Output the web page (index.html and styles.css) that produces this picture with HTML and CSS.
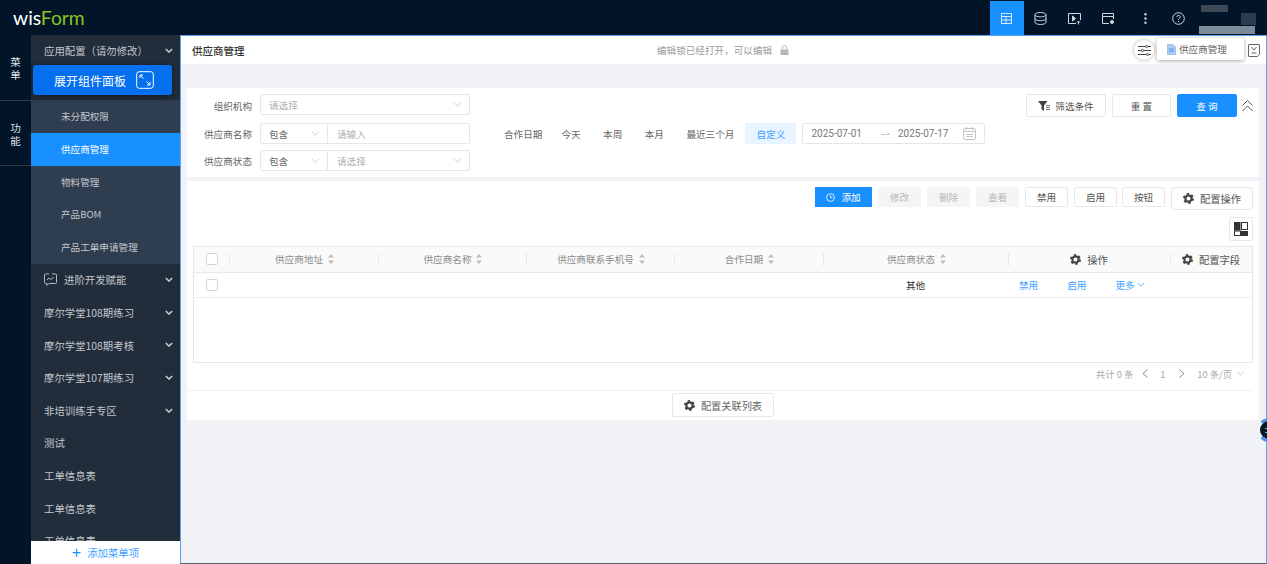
FILE: index.html
```html
<!DOCTYPE html>
<html lang="zh">
<head>
<meta charset="utf-8">
<title>供应商管理</title>
<link rel="stylesheet" href="styles.css">
</head>
<body>
<svg class="sprite" width="0" height="0" aria-hidden="true">
  <symbol id="gear" viewBox="0 0 12 12">
    <circle cx="6" cy="6" r="3.4" fill="none" stroke="currentColor" stroke-width="2.4"/>
    <circle cx="6" cy="6" r="5" fill="none" stroke="currentColor" stroke-width="2" stroke-dasharray="2.6 2.64"/>
  </symbol>
  <symbol id="down" viewBox="0 0 10 6">
    <path d="M1 1l4 4 4-4" fill="none" stroke="currentColor" stroke-width="1"/>
  </symbol>
  <symbol id="down-b" viewBox="0 0 10 6">
    <path d="M1 1l4 4 4-4" fill="none" stroke="currentColor" stroke-width="1.800"/>
  </symbol>
  <symbol id="sort" viewBox="0 0 6 10">
    <path d="M3 0l3 3.6H0zM3 10L0 6.400h6z" fill="currentColor"/>
  </symbol>
</svg>
<div class="app">
  <header class="topbar">
    <div class="logo"><span class="logo-w">wis</span><span class="logo-g">Form</span></div>
    <nav class="top-icons">
      <span class="top-btn active"><svg width="11" height="11" viewBox="0 0 11 11" fill="none" stroke="#fff" stroke-opacity=".8"><rect x=".5" y=".5" width="10" height="10"/><path d="M.5 3.500h10M5 3.500v7M.5 7h10"/></svg></span>
      <span class="top-btn"><svg width="13" height="13" viewBox="0 0 13 13" fill="none" stroke="#cfd6dd"><ellipse cx="6.500" cy="2.700" rx="5.500" ry="2.200"/><path d="M1 2.700v7.600c0 1.200 2.500 2.200 5.500 2.200s5.500-1 5.500-2.200V2.700M1 6.500c0 1.200 2.500 2.200 5.500 2.200S12 7.700 12 6.500"/></svg></span>
      <span class="top-btn"><svg width="13" height="13" viewBox="0 0 13 13" fill="none" stroke="#cfd6dd"><path d="M8 11.500H.5v-10h12V8"/><path d="M4.500 4l3 2.500-3 2.500z" fill="#cfd6dd"/><path d="M10.500 12.500V9M9 10.500l1.500-1.500 1.500 1.500"/></svg></span>
      <span class="top-btn"><svg width="13" height="13" viewBox="0 0 13 13" fill="none" stroke="#cfd6dd"><path d="M7 11.500H.5v-10h11V7M.5 4.500h11"/><circle cx="10" cy="10" r="1.500" fill="#cfd6dd"/></svg></span>
      <span class="top-btn top-dots"><svg width="3" height="11" viewBox="0 0 3 11" fill="#cfd6dd"><circle cx="1.500" cy="1.300" r="1.200"/><circle cx="1.500" cy="5.500" r="1.200"/><circle cx="1.500" cy="9.700" r="1.200"/></svg></span>
      <span class="top-btn"><svg width="13" height="13" viewBox="0 0 13 13" fill="none" stroke="#cfd6dd"><circle cx="6.500" cy="6.500" r="5.800"/><path d="M4.800 5c0-2.200 3.500-2.200 3.500 0 0 1.200-1.800 1.300-1.800 2.700M6.500 9v1"/></svg></span>
    </nav>
    <div class="user">
      <i class="u1"></i>
      <i class="u2"></i>
      <i class="u3"></i>
    </div>
  </header>
  <div class="body">
    <aside class="rail">
      <div class="rail-item rail-1">菜<br>单</div>
      <div class="rail-item rail-2">功<br>能</div>
    </aside>
    <aside class="sidebar">
      <div class="menu">
        <div class="mi">应用配置（请勿修改）<svg class="mi-arrow"><use href="#down-b"/></svg></div>
        <div class="mi"></div>
        <div class="sub">
          <div class="si">未分配权限</div>
          <div class="si active">供应商管理</div>
          <div class="si">物料管理</div>
          <div class="si">产品BOM</div>
          <div class="si">产品工单申请管理</div>
        </div>
        <div class="mi"><svg class="mi-icon" width="13" height="13" viewBox="0 0 13 13" fill="none" stroke="#aeb6bf"><path d="M5 1h-3.500a1 1 0 0 0-1 1v7.500a1 1 0 0 0 1 1H3V12.500l2-2h6.500a1 1 0 0 0 1-1V2a1 1 0 0 0-1-1H8"/><path d="M3 7l2-2 2 1.500L10 4"/></svg>进阶开发赋能<svg class="mi-arrow"><use href="#down-b"/></svg></div>
        <div class="mi">摩尔学堂108期练习<svg class="mi-arrow"><use href="#down-b"/></svg></div>
        <div class="mi">摩尔学堂108期考核<svg class="mi-arrow"><use href="#down-b"/></svg></div>
        <div class="mi">摩尔学堂107期练习<svg class="mi-arrow"><use href="#down-b"/></svg></div>
        <div class="mi">非培训练手专区<svg class="mi-arrow"><use href="#down-b"/></svg></div>
        <div class="mi">测试</div>
        <div class="mi">工单信息表</div>
        <div class="mi">工单信息表</div>
        <div class="mi">工单信息表</div>
      </div>
      <div class="expand">展开组件面板
        <svg width="18" height="18" viewBox="0 0 18 18" fill="none" stroke="#fff"><rect x=".7" y=".7" width="16.600" height="16.600" rx="2.500"/><path d="M4 4l3.500 3.500M4 7V4h3M14 14l-3.500-3.500M14 11v3h-3"/></svg>
      </div>
      <div class="add-menu"><span class="plus">+</span>添加菜单项</div>
    </aside>
    <main class="main">
      <div class="page-head">
        <div class="page-title">供应商管理</div>
        <div class="lock">编辑锁已经打开，可以编辑
          <svg width="9" height="10" viewBox="0 0 9 10" fill="#b5b8bc"><path d="M.5 4.500h8V10h-8z"/><path d="M2.300 4.500V2.800a2.200 2.200 0 0 1 4.400 0v1.700" fill="none" stroke="#b5b8bc"/></svg>
        </div>
        <div class="head-right">
          <span class="round-btn"><svg width="13" height="11" viewBox="0 0 13 11" fill="none" stroke="#444"><path d="M0 1.500h7M10 1.500h3M0 5.500h3M6 5.500h7M0 9.500h8M11 9.500h2"/><circle cx="8.500" cy="1.500" r="1.100"/><circle cx="4.500" cy="5.500" r="1.100"/><circle cx="9.500" cy="9.500" r="1.100"/></svg></span>
          <span class="doc-icon"><svg width="12" height="13" viewBox="0 0 12 13" fill="none" stroke="#666"><path d="M1 .5h10a.5.500 0 0 1 .5.500v9L9.500 12.500H1a.5.500 0 0 1-.5-.500V1A.5.500 0 0 1 1 .5z"/><path d="M3.500 3l2.500 3 2.500-3M3.500 9h5"/></svg></span>
        </div>
        <div class="tab-pop">
          <svg width="9" height="11" viewBox="0 0 9 11"><path d="M.5.500h5.500L8.500 3v7.500h-8z" fill="#a9cdf2" stroke="#7fa8d4" stroke-width=".6"/><path d="M2 5h5M2 7h5" stroke="#3e8ee0" stroke-width=".8"/></svg>
          供应商管理
        </div>
      </div>
      <section class="filter">
        <div class="f-row f-row-1">
          <label class="f-label">组织机构</label>
          <div class="field field-up"><span class="ph">请选择</span><svg class="chev"><use href="#down"/></svg></div>
          <div class="f-actions">
            <button class="btn btn-filter"><svg width="12" height="10" viewBox="0 0 12 10" fill="#444"><path d="M0 0h9.500L6 4.500V10L3.500 8V4.500z"/><path d="M8 4.500h4M8 6.500h4M8 8.500h4" stroke="#777"/></svg>筛选条件</button>
            <button class="btn btn-reset">重 置</button>
            <button class="btn btn-query">查 询</button>
            <svg class="collapse" width="11" height="12" viewBox="0 0 11 12" fill="none" stroke="#555"><path d="M.5 5.500l5-5 5 5M.5 11l5-5 5 5"/></svg>
          </div>
        </div>
        <div class="f-row f-row-2">
          <label class="f-label">供应商名称</label>
          <div class="field">
            <span class="op">包含<svg class="chev"><use href="#down"/></svg></span>
            <span class="ph ph-in">请输入</span>
          </div>
          <div class="dates">
            <span class="d-label">合作日期</span>
            <span class="d-opt">今天</span>
            <span class="d-opt">本周</span>
            <span class="d-opt">本月</span>
            <span class="d-opt">最近三个月</span>
            <span class="d-opt on">自定义</span>
            <div class="range">
              <span>2025-07-01</span>
              <svg class="arrow" width="9" height="5" viewBox="0 0 9 5" fill="none" stroke="#c4c4c4"><path d="M0 3.500h8.500L6.500 1.500"/></svg>
              <span>2025-07-17</span>
              <svg class="cal" width="13" height="13" viewBox="0 0 13 13" fill="none" stroke="#c4c4c4"><rect x=".5" y="1.500" width="12" height="11" rx="1.500"/><path d="M.5 4.500h12M3.500 0v3M9.500 0v3M3 7.500h7M3 9.500h7"/></svg>
            </div>
          </div>
        </div>
        <div class="f-row f-row-3">
          <label class="f-label">供应商状态</label>
          <div class="field">
            <span class="op">包含<svg class="chev"><use href="#down"/></svg></span>
            <span class="ph ph-in">请选择</span>
            <svg class="chev"><use href="#down"/></svg>
          </div>
        </div>
      </section>
      <section class="card">
        <div class="toolbar">
          <button class="btn btn-add"><svg width="9" height="9" viewBox="0 0 9 9" fill="none" stroke="#d6eaff"><circle cx="4.500" cy="4.500" r="3.900"/><path d="M4.500 2.200v2.500h2"/></svg>添加</button>
          <button class="btn btn-t btn-off">修改</button>
          <button class="btn btn-t btn-off">删除</button>
          <button class="btn btn-t btn-off">查看</button>
          <button class="btn btn-t">禁用</button>
          <button class="btn btn-t">启用</button>
          <button class="btn btn-t btn-last">按钮</button>
          <button class="btn btn-cfg"><svg class="gear"><use href="#gear"/></svg>配置操作</button>
        </div>
        <div class="toolbar-2">
          <button class="btn btn-layout"><svg width="14" height="14" viewBox="0 0 14 14"><rect width="6.500" height="8.500" fill="#333"/><rect x="7.500" y=".5" width="6" height="7" fill="#fff" stroke="#333"/><rect x=".5" y="9" width="6" height="4.500" fill="#fff" stroke="#333"/><rect x="7" y="9" width="7" height="5" fill="#333"/></svg></button>
        </div>
        <div class="table">
          <div class="tr th">
            <div class="td td-check"><i class="check"></i></div>
            <div class="td td-sort"><span>供应商地址</span><svg class="sort"><use href="#sort"/></svg></div>
            <div class="td td-sort"><span>供应商名称</span><svg class="sort"><use href="#sort"/></svg></div>
            <div class="td td-sort"><span>供应商联系手机号</span><svg class="sort"><use href="#sort"/></svg></div>
            <div class="td td-sort"><span>合作日期</span><svg class="sort"><use href="#sort"/></svg></div>
            <div class="td td-sort"><span>供应商状态</span><svg class="sort"><use href="#sort"/></svg></div>
            <div class="td td-fix"><svg class="gear"><use href="#gear"/></svg><span>操作</span></div>
            <div class="td td-cfg"><svg class="gear"><use href="#gear"/></svg><span>配置字段</span></div>
          </div>
          <div class="tr tb">
            <div class="td td-check"><i class="check"></i></div>
            <div class="td"></div>
            <div class="td"></div>
            <div class="td"></div>
            <div class="td"></div>
            <div class="td td-status">其他</div>
            <div class="td td-ops"><a>禁用</a><a>启用</a><a>更多<svg class="more"><use href="#down"/></svg></a></div>
          </div>
        </div>
        <div class="pager">
          <span>共计 0 条</span>
          <svg class="p-prev" width="6" height="9" viewBox="0 0 6 9" fill="none" stroke="#888"><path d="M5.500.5l-4.500 4 4.500 4"/></svg>
          <span class="p-num">1</span>
          <svg class="p-next" width="6" height="9" viewBox="0 0 6 9" fill="none" stroke="#888"><path d="M.5.500l4.500 4-4.500 4"/></svg>
          <span class="p-size">10 条/页<svg class="chev"><use href="#down"/></svg></span>
        </div>
        <div class="card-foot">
          <button class="btn btn-rel"><svg class="gear"><use href="#gear"/></svg>配置关联列表</button>
        </div>
      </section>
      <div class="float-ball"><i></i></div>
    </main>
  </div>
</div>
</body>
</html>
```

FILE: styles.css
```css
* { box-sizing: border-box; }
html, body { margin: 0; padding: 0; }
body {
  width: 1267px;
  height: 564px;
  overflow: hidden;
  font-family: "Noto Sans CJK SC", "Noto Sans", sans-serif;
  font-size: 9.600px;
  color: #555;
}
.sprite { position: absolute; }
.app { display: flex; flex-direction: column; height: 564px; }

/* top bar */
.topbar {
  height: 35px;
  flex: none;
  background: #011428;
  display: flex;
  align-items: stretch;
  padding-top: 1px;
}
.logo {
  font-family: "Lato", sans-serif;
  font-size: 19.300px;
  line-height: 34px;
  padding-left: 13px;
  width: 990px;
  flex: none;
}
.logo-w { color: #fff; }
.logo-g { color: #8cc322; }
.top-icons { display: flex; flex: none; width: 207px; }
.top-btn { width: 33.800px; flex: none; display: flex; align-items: center; justify-content: center; }
.top-btn.active { background: #1890ff; }
.top-dots { margin-left: 3px; }
.user { width: 58px; margin-left: 2px; display: flex; flex-direction: column; }
.user i { display: block; }
.u1 { width: 27px; height: 7px; margin: 4px 0 0 2px; background: #3e4957; }
.u2 { width: 15px; height: 12px; margin: 1px 0 0 42px; background: #2c3b4d; }
.u3 { width: 56px; height: 8px; margin-top: 1px; background: #7b8a98; }

/* layout */
.body { flex: 1; display: flex; min-height: 0; }
.rail { width: 31px; flex: none; background: #011428; color: #dfe3e6; }
.rail-item {
  height: 65.500px;
  display: flex;
  align-items: center;
  justify-content: center;
  text-align: center;
  line-height: 13px;
  font-size: 10.500px;
  border-bottom: 1px solid #2b3a4b;
}
.rail-1 { padding-top: 2px; }
.rail-2 { padding-top: 3px; }
.sidebar { width: 149px; flex: none; background: #222d3c; position: relative; overflow: hidden; color: #c3c7cc; }
.menu { height: calc(100% - 23px); overflow: hidden; }
.mi { height: 32.600px; padding: 0 0 1px 13px; font-size: 10.400px; display: flex; align-items: center; position: relative; }
.mi-arrow { position: absolute; right: 7px; top: 13px; width: 8px; height: 5px; color: #c9ced3; }
.mi-icon { margin-right: 7px; }
.sub { background: #2f3d50; }
.si { height: 32.800px; padding: 0 0 1px 30px; display: flex; align-items: center; }
.si.active { background: #1890ff; color: #fff; }
.expand {
  position: absolute;
  left: 2px;
  top: 30px;
  width: 139px;
  height: 30px;
  background: #0570ee;
  border-radius: 3px;
  box-shadow: 0 1px 6px rgba(0,0,0,.45);
  color: #fff;
  font-size: 12px;
  display: flex;
  align-items: center;
  justify-content: space-between;
  padding: 0 18px 0 21px;
}
.add-menu {
  position: absolute;
  left: 0;
  right: 0;
  bottom: 0;
  height: 23px;
  background: #fff;
  color: #40a0ff;
  font-size: 10.400px;
  display: flex;
  align-items: center;
  justify-content: center;
}
.plus { font-size: 16px; line-height: 1; margin-right: 6px; color: #1890ff; font-family: "Liberation Sans", sans-serif; }

/* main */
.main {
  flex: 1;
  min-width: 0;
  background: #f0f2f5;
  border-left: 1px solid #5aa5ee;
  border-top: 1px solid #5aa5ee;
  border-right: 1px solid #5aa5ee;
  border-bottom: 1px solid #5b6673;
  position: relative;
}
.page-head {
  height: 28px;
  background: #fff;
  display: flex;
  align-items: center;
  padding: 0 6px 0 11px;
  position: relative;
}
.page-title { font-size: 10.500px; font-weight: 500; color: #333; width: 465px; }
.lock { flex: 1; color: #9a9a9a; display: flex; align-items: center; gap: 8px; }
.head-right { display: flex; align-items: center; gap: 94px; }
.round-btn {
  width: 20px;
  height: 20px;
  border-radius: 50%;
  background: #fff;
  box-shadow: 0 0 4px rgba(0,0,0,.3);
  display: flex;
  align-items: center;
  justify-content: center;
}
.doc-icon { display: flex; }
.tab-pop {
  position: absolute;
  left: 976px;
  top: 2px;
  width: 87px;
  height: 22px;
  background: #fff;
  border-radius: 2px;
  box-shadow: 0 1px 4px rgba(0,0,0,.35);
  display: flex;
  align-items: center;
  gap: 3px;
  padding-left: 10px;
  color: #666;
}

/* filter */
.filter {
  margin: 24px 7px 0 6px;
  height: 89px;
  background: #fff;
  padding-top: 6px;
}
.f-row { display: flex; align-items: center; }
.f-row-1 { height: 23px; }
.f-row-2 { height: 21px; margin-top: 6px; }
.f-row-3 { height: 21px; margin-top: 6px; }
.f-label { width: 66px; flex: none; text-align: right; color: #666; padding-right: 1px; }
.field {
  margin-left: 7px;
  height: 21px;
  width: 210px;
  flex: none;
  border: 1px solid #e6e6e6;
  border-radius: 2px;
  display: flex;
  align-items: center;
  padding-left: 8px;
  color: #666;
}
.field-up { margin-top: -2px; }
.ph { color: #b0b0b0; flex: 1; }
.ph-in { padding-left: 9px; }
.chev { width: 9px; height: 5px; color: #c4c4c4; margin-right: 7px; flex: none; }
.op {
  width: 59px;
  height: 19px;
  flex: none;
  display: flex;
  align-items: center;
  justify-content: space-between;
  border-right: 1px solid #e6e6e6;
}
.f-actions { margin-left: auto; display: flex; align-items: center; gap: 6px; padding-right: 22px; position: relative; }
.collapse { position: absolute; right: 6px; top: 6px; }
.btn {
  font: inherit;
  background: #fff;
  border: 1px solid #e8e8e8;
  border-radius: 2px;
  color: #555;
  padding: 0;
  display: flex;
  align-items: center;
  justify-content: center;
  flex: none;
}
.btn-filter { width: 80px; height: 23px; gap: 5px; }
.btn-reset { width: 59px; height: 23px; }
.btn-query { width: 60px; height: 23px; background: #1890ff; border-color: #1890ff; color: #fff; }
.dates { margin-left: 34px; display: flex; align-items: center; height: 21px; }
.d-label { margin-right: 9px; color: #666; }
.d-opt { height: 21px; padding: 0 10px; display: flex; align-items: center; color: #666; margin-right: 2.500px; }
.d-opt.on { background: #e8f4ff; color: #40a0ff; width: 51px; padding: 0; justify-content: center; margin: 0 6px 0 -1.500px; }
.range {
  width: 183px;
  height: 21px;
  border: 1px solid #e6e6e6;
  border-radius: 2px;
  display: flex;
  align-items: center;
  padding-left: 8px;
  color: #777;
  font-size: 10px;
  font-family: "Roboto", sans-serif;
}
.arrow { margin: 0 8px 0 19px; }
.cal { margin-left: auto; margin-right: 8px; }

/* card */
.card { margin: 4px 7px 0 6px; height: 239px; background: #fff; padding: 6px 6px 0; }
.toolbar { display: flex; justify-content: flex-end; align-items: flex-start; gap: 6px; }
.btn-add { width: 57px; height: 20px; background: #1890ff; border-color: #1890ff; color: #fff; gap: 6px; border-radius: 0; }
.btn-t { width: 43px; height: 20px; }
.btn-last { margin-left: -1px; }
.btn-off { background: #f5f5f5; border-color: #f5f5f5; color: #b8b8b8; }
.btn-cfg { width: 82px; height: 23px; gap: 6px; font-size: 10.300px; }
.gear { width: 11px; height: 11px; color: #444; flex: none; }
.toolbar-2 { display: flex; justify-content: flex-end; margin-top: 7px; }
.btn-layout { width: 24px; height: 24px; }
.table { margin-top: 5px; height: 117px; border: 1px solid #e8e8e8; }
.tr { display: grid; grid-template-columns: 35px 149px 148px 148px 149px 185px 162px 82px; }
.th { height: 26px; background: #fafafa; border-bottom: 1px solid #e8e8e8; color: #8c8c8c; }
.tb { height: 25px; border-bottom: 1px solid #ececec; }
.td { display: flex; align-items: center; justify-content: center; gap: 4px; position: relative; padding-bottom: 1px; }
.td-sort { padding-left: 2px; gap: 5px; }
.th .td + .td::before {
  content: "";
  position: absolute;
  left: 0;
  top: 6px;
  bottom: 6px;
  width: 1px;
  background: #e8e8e8;
}
.td-check { justify-content: flex-start; padding-left: 12px; }
.check { width: 12px; height: 12px; border: 1px solid #d4d4d4; border-radius: 2px; background: #fff; }
.sort { width: 6px; height: 10px; color: #bdbdbd; }
.th .td-fix, .th .td-cfg { gap: 6px; color: #555; font-size: 10.300px; }
.th .td-fix::before { top: 0; bottom: 0; background: #ececec; }
.td-status { color: #333; }
.td-ops { justify-content: flex-start; padding-left: 11px; gap: 29px; color: #40a0ff; }
.td-ops a { display: flex; align-items: center; gap: 2px; }
.more { width: 8px; height: 5px; }
.pager {
  height: 28px;
  display: flex;
  align-items: center;
  justify-content: flex-end;
  color: #a8a8a8;
  font-size: 9.300px;
  border-bottom: 1px solid #f0f0f0;
  margin-left: -6px;
  padding: 0 8px 6px 0;
}
.p-prev { margin-left: 9px; }
.p-num { margin-left: 12px; }
.p-next { margin-left: 14px; }
.p-size { display: flex; align-items: center; gap: 4px; margin-left: 12px; }
.p-size .chev { margin-right: 0; }
.card-foot { display: flex; justify-content: center; padding-top: 2px; }
.btn-rel { width: 102px; height: 24px; gap: 6px; color: #666; font-size: 10.200px; }

/* floating ball */
.float-ball {
  position: absolute;
  left: 1076px;
  top: 382px;
  width: 24px;
  height: 24px;
  background: #061826;
  background-clip: padding-box;
  border: 3px solid #ffffff00;
  border-top-color: #4a8ef0;
  border-bottom-color: #4a8ef0;
  border-radius: 50%;
  display: flex;
  align-items: center;
  padding-left: 5px;
}
.float-ball i { width: 4px; height: 5px; border-top: 1px solid #3fd0c9; border-bottom: 1px solid #3fd0c9; }
```
